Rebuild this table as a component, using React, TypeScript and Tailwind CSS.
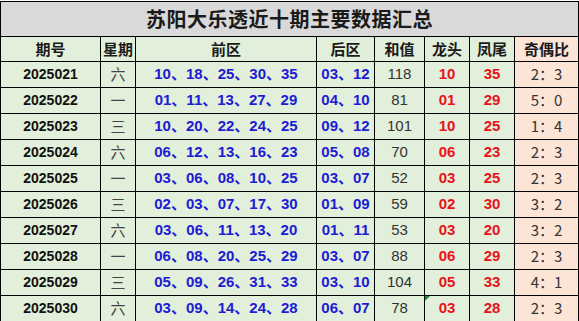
const rows: [string, string, string, string, string, string, string, string][] = [
  ['2025021', '六', '10、18、25、30、35', '03、12', '118', '10', '35', '2：3'],
  ['2025022', '一', '01、11、13、27、29', '04、10', '81', '01', '29', '5：0'],
  ['2025023', '三', '10、20、22、24、25', '09、12', '101', '10', '25', '1：4'],
  ['2025024', '六', '06、12、13、16、23', '05、08', '70', '06', '23', '2：3'],
  ['2025025', '一', '03、06、08、10、25', '03、07', '52', '03', '25', '2：3'],
  ['2025026', '三', '02、03、07、17、30', '01、09', '59', '02', '30', '3：2'],
  ['2025027', '六', '03、06、11、13、20', '01、11', '53', '03', '20', '3：2'],
  ['2025028', '一', '06、08、20、25、29', '03、07', '88', '06', '29', '2：3'],
  ['2025029', '三', '05、09、26、31、33', '03、10', '104', '05', '33', '4：1'],
  ['2025030', '六', '03、09、14、24、28', '06、07', '78', '03', '28', '2：3'],
];

const headers = ['期号', '星期', '前区', '后区', '和值', '龙头', '凤尾', '奇偶比'];
const widths = ['w-[100px]', 'w-[35px]', 'w-[181px]', 'w-[58px]', 'w-[50px]', 'w-[45px]', 'w-[45px]', 'w-[64px]'];

export default function App() {
  return (
    <div className="w-[579px] h-[321px] overflow-hidden bg-white pt-px font-['Liberation_Sans','Noto_Sans_CJK_SC',sans-serif]">
      <table className="table-fixed border-collapse w-[578px] text-center">
        <colgroup>
          {widths.map((w, i) => (
            <col key={i} className={w} />
          ))}
        </colgroup>
        <thead>
          <tr className="h-[35px]">
            <th
              colSpan={8}
              className="border border-black bg-[#d9d9d9] text-[20px] font-bold text-[#1a1a1a] font-['Noto_Sans_CJK_SC',sans-serif] tracking-[0.5px]"
            >
              苏阳大乐透近十期主要数据汇总
            </th>
          </tr>
          <tr className="h-[25px]">
            {headers.map((h, i) => (
              <th
                key={h}
                className={`border border-black text-[15px] font-bold text-[#1a1a1a] font-['Noto_Sans_CJK_SC',sans-serif] ${i === 7 ? 'bg-[#fce4d6]' : 'bg-[#e2efda]'}`}
              >
                {h}
              </th>
            ))}
          </tr>
        </thead>
        <tbody>
          {rows.map((r, ri) => (
            <tr key={r[0]} className="h-[26px] text-[14px]">
              <td className="border border-black bg-[#e2efda] font-bold text-[#111]">{r[0]}</td>
              <td className="border border-black bg-[#e2efda] text-[#444] text-[15px] font-['Noto_Sans_CJK_SC',sans-serif]">{r[1]}</td>
              <td className="border border-black bg-[#e2efda] font-bold text-[#1c1cd4] text-[15px]">{r[2]}</td>
              <td className="border border-black bg-[#e2efda] font-bold text-[#1c1cd4] text-[15px]">{r[3]}</td>
              <td className="border border-black bg-[#e2efda] text-[#333] text-[15px]">{r[4]}</td>
              <td className="relative border border-black bg-[#e2efda] font-bold text-[#e8121a] text-[15px]">
                {ri === rows.length - 1 && (
                  <span className="absolute left-0 top-0 w-0 h-0 border-t-[5px] border-r-[5px] border-t-[#1e8a3a] border-r-transparent" />
                )}
                {r[5]}
              </td>
              <td className="border border-black bg-[#e2efda] font-bold text-[#e8121a] text-[15px]">{r[6]}</td>
              <td className="border border-black bg-[#fce4d6] text-[#333] text-[15px] font-['Noto_Sans_CJK_SC',sans-serif]">{r[7]}</td>
            </tr>
          ))}
        </tbody>
      </table>
    </div>
  );
}
